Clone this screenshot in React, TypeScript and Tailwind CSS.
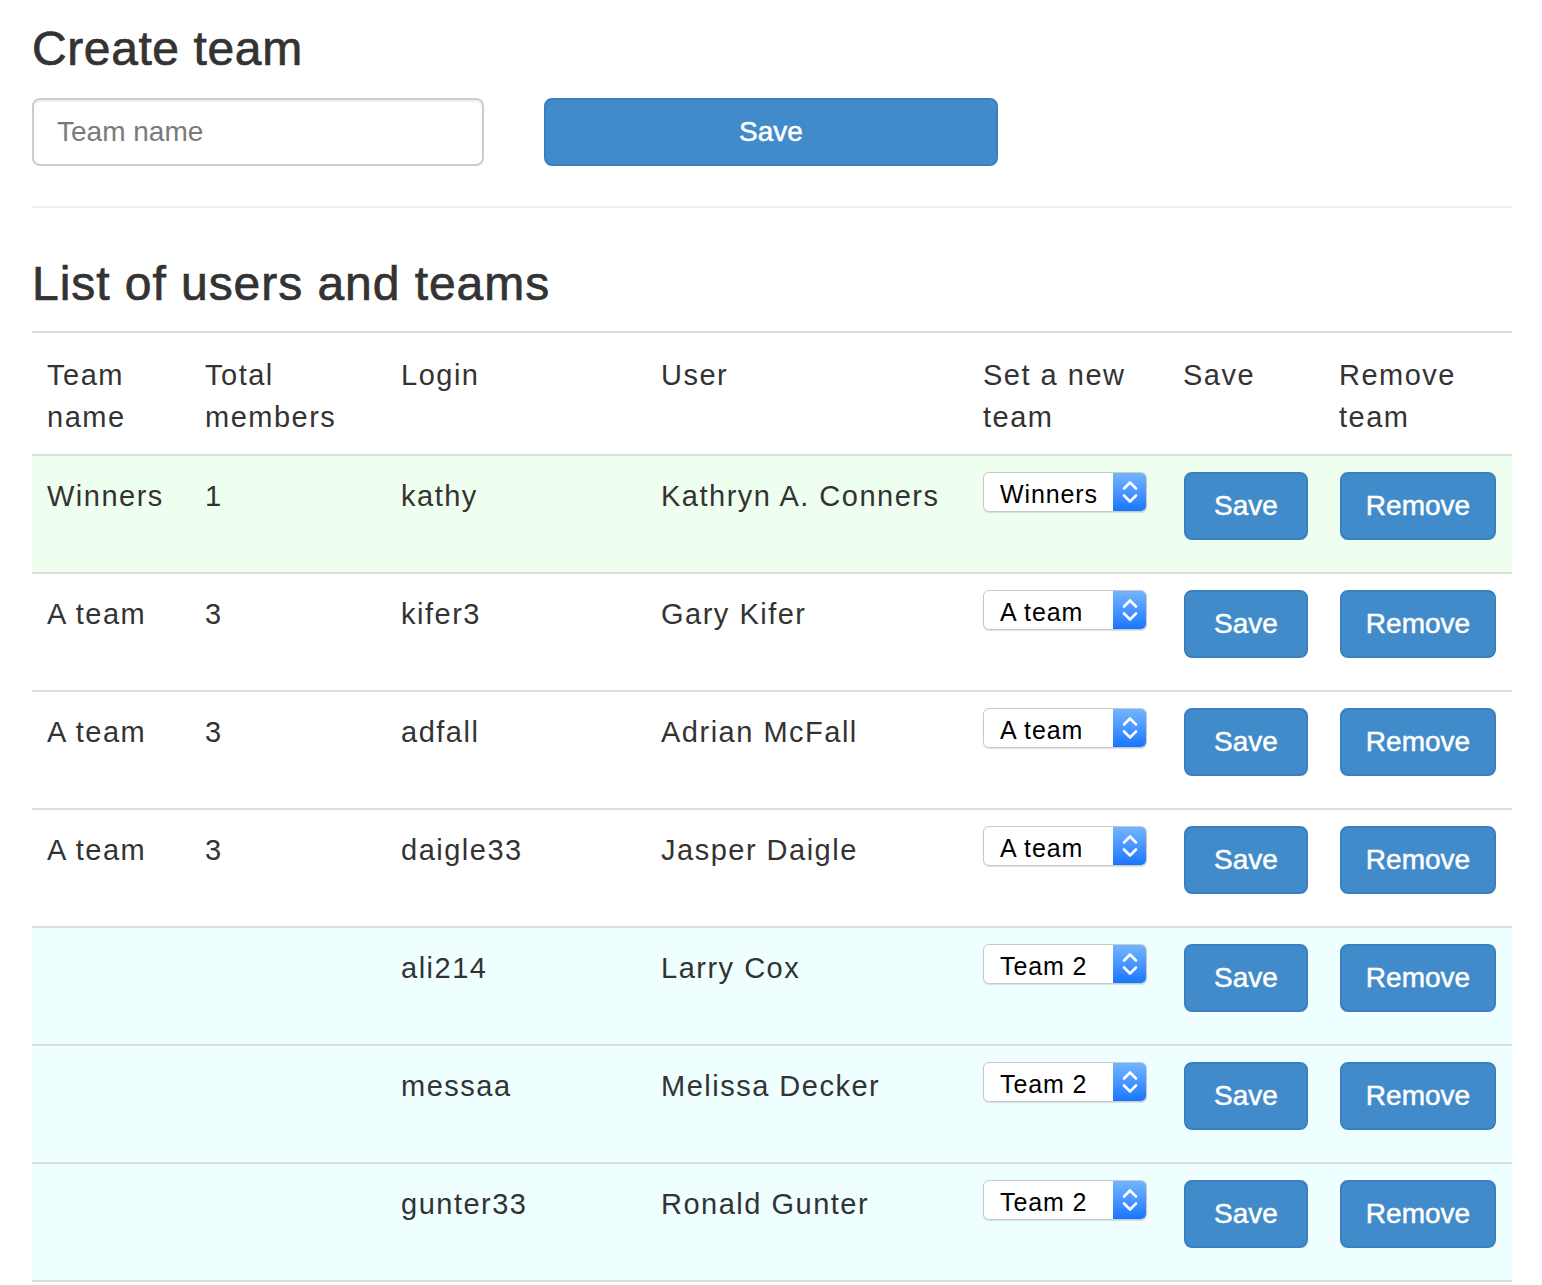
import React from "react";

const rows = [
  { team: "Winners", total: "1", login: "kathy", user: "Kathryn A. Conners", sel: "Winners", bg: "bg-[#efffef]" },
  { team: "A team", total: "3", login: "kifer3", user: "Gary Kifer", sel: "A team", bg: "bg-white" },
  { team: "A team", total: "3", login: "adfall", user: "Adrian McFall", sel: "A team", bg: "bg-white" },
  { team: "A team", total: "3", login: "daigle33", user: "Jasper Daigle", sel: "A team", bg: "bg-white" },
  { team: "", total: "", login: "ali214", user: "Larry Cox", sel: "Team 2", bg: "bg-[#efffff]" },
  { team: "", total: "", login: "messaa", user: "Melissa Decker", sel: "Team 2", bg: "bg-[#efffff]" },
  { team: "", total: "", login: "gunter33", user: "Ronald Gunter", sel: "Team 2", bg: "bg-[#efffff]" },
];

const grid = "grid grid-cols-[157px_196px_260px_322px_200px_156px_189px]";

function FakeSelect({ value }: { value: string }) {
  return (
    <div className="flex h-[40px] w-[164px] overflow-hidden rounded-[6px] border border-[#c9c9c9] bg-white shadow-[0_1px_1px_rgba(0,0,0,0.12)] tracking-normal">
      <div className="flex-1 pl-[16px] text-[25px] leading-[42px] text-black tracking-[0.9px]">{value}</div>
      <div className="flex w-[33px] items-center justify-center bg-gradient-to-b from-[#72b4ff] to-[#1675ff]">
        <svg width="18" height="32" viewBox="0 0 18 32" fill="none" stroke="white" strokeWidth="2.6" strokeLinecap="round" strokeLinejoin="round">
          <path d="M3 12.5 L9 6.5 L15 12.5" />
          <path d="M3 19.5 L9 25.5 L15 19.5" />
        </svg>
      </div>
    </div>
  );
}

function Btn({ label, w }: { label: string; w: string }) {
  return (
    <button className={`${w} h-[68px] rounded-[8px] border-2 border-[#3a80c0] bg-[#428bca] text-[28px] text-white tracking-normal [-webkit-text-stroke:0.5px_white]`}>
      {label}
    </button>
  );
}

export default function App() {
  return (
    <div
      className="w-[1512px] pl-[32px] pt-[23px] text-[#333] bg-white"
      style={{ fontFamily: '"Liberation Sans", Arial, sans-serif' }}
    >
      <h1 className="text-[48px] leading-[1.1] tracking-[0.6px] [-webkit-text-stroke:0.7px_#333]">Create team</h1>
      <div className="mt-[22px] flex gap-[60px]">
        <div className="flex h-[68px] w-[452px] items-center rounded-[8px] border-2 border-[#cccccc] pl-[23px] text-[28px] text-[#7a7a7a] shadow-[inset_0_2px_2px_rgba(0,0,0,0.07)]">
          Team name
        </div>
        <button className="h-[68px] w-[454px] rounded-[8px] border-2 border-[#3a80c0] bg-[#428bca] text-[28px] text-white [-webkit-text-stroke:0.5px_white]">
          Save
        </button>
      </div>
      <div className="mt-[40px] h-[2px] bg-[#eeeeee]" />
      <h2 className="mt-[50px] text-[48px] leading-[1.1] tracking-[0.95px] [-webkit-text-stroke:0.7px_#333]">List of users and teams</h2>
      <div className="mt-[20px] border-t-2 border-[#dddddd] text-[29px] tracking-[1.5px]">
        <div className={`${grid} border-b-2 border-[#dddddd] pt-[21px] pb-[16px] leading-[42px]`}>
          <div className="pl-[15px]">Team<br />name</div>
          <div className="pl-[16px]">Total<br />members</div>
          <div className="pl-[16px]">Login</div>
          <div className="pl-[16px]">User</div>
          <div className="pl-[16px]">Set a new<br />team</div>
          <div className="pl-[16px]">Save</div>
          <div className="pl-[16px]">Remove<br />team</div>
        </div>
        {rows.map((r, i) => (
          <div key={i} className={`${grid} ${r.bg} h-[118px] border-b-2 border-[#dddddd] leading-[40px]`}>
            <div className="pl-[15px] pt-[20px]">{r.team}</div>
            <div className="pl-[16px] pt-[20px]">{r.total}</div>
            <div className="pl-[16px] pt-[20px]">{r.login}</div>
            <div className="pl-[16px] pt-[20px]">{r.user}</div>
            <div className="pl-[16px] pt-[16px]">
              <FakeSelect value={r.sel} />
            </div>
            <div className="pl-[17px] pt-[16px]">
              <Btn label="Save" w="w-[124px]" />
            </div>
            <div className="pl-[17px] pt-[16px]">
              <Btn label="Remove" w="w-[156px]" />
            </div>
          </div>
        ))}
      </div>
    </div>
  );
}
